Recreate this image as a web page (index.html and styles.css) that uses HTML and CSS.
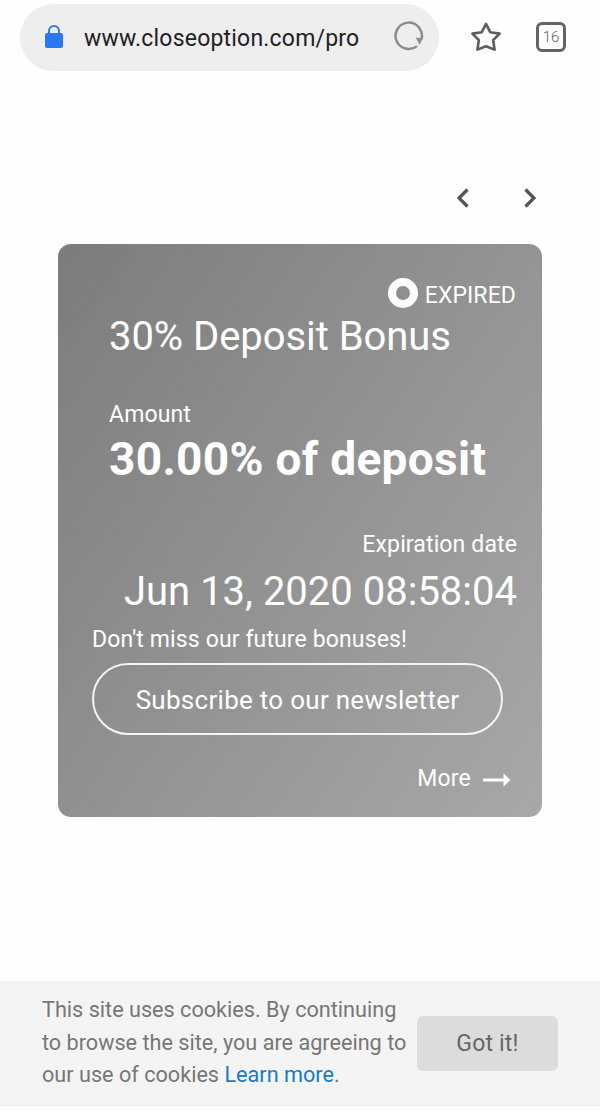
FILE: index.html
```html
<!DOCTYPE html>
<html lang="en">
<head>
    <meta charset="UTF-8">
    <meta name="viewport" content="width=device-width, initial-scale=1.0">
    <title>Bonus - CloseOption</title>
    <link rel="stylesheet" href="styles.css">
</head>
<body>
    <header class="browser-bar">
        <div class="address">
            <svg class="lock" width="20" height="26" viewBox="0 0 20 26">
                <path d="M5 11V7a5 5 0 0 1 10 0v4" fill="none" stroke="#2a78f5" stroke-width="2"/>
                <rect x="1" y="9" width="18" height="15" rx="2" fill="#2a78f5"/>
            </svg>
            <span class="url">www.closeoption.com/pro</span>
            <svg class="reload" width="32" height="32" viewBox="0 0 32 32">
                <path d="M24 26.1A13.2 13.2 0 1 1 28.4 19.5" fill="none" stroke="#8c8c8c" stroke-width="2.5"/>
                <path d="M22.6 17.4L29.4 18.4L26.8 24.8Z" fill="#8c8c8c"/>
            </svg>
        </div>
        <svg class="star" width="32" height="32" viewBox="0 0 32 32">
            <path d="M16 2.8L20.2 11.2L29.6 12.6L23.2 19.2L24.6 28.6L16 25.2L7.4 28.6L8.8 19.2L2.4 12.6L11.8 11.2Z" fill="none" stroke="#5c5c5c" stroke-width="2.6" stroke-linejoin="round"/>
        </svg>
        <div class="tabs">16</div>
    </header>

    <main>
        <nav class="slider-nav">
            <svg width="14" height="22" viewBox="0 0 14 22">
                <path d="M11.5 2.5L3 11L11.5 19.5" fill="none" stroke="#555" stroke-width="3.2"/>
            </svg>
            <svg width="14" height="22" viewBox="0 0 14 22">
                <path d="M2.5 2.5L11 11L2.5 19.5" fill="none" stroke="#555" stroke-width="3.2"/>
            </svg>
        </nav>

        <section class="card">
            <div class="status">
                <span class="status-icon"></span>
                <span class="status-text">EXPIRED</span>
            </div>
            <h1 class="title">30% Deposit Bonus</h1>
            <p class="label amount-label">Amount</p>
            <p class="amount">30.00% of deposit</p>
            <p class="label date-label">Expiration date</p>
            <p class="date">Jun 13, 2020 08:58:04</p>
            <p class="label hint">Don't miss our future bonuses!</p>
            <a class="subscribe">Subscribe to our newsletter</a>
            <a class="more">
                <span>More</span>
                <svg width="28" height="14" viewBox="0 0 28 14">
                    <path d="M0 7H22" stroke="#fff" stroke-width="3"/>
                    <path d="M20.5 0.5L27.5 7L20.5 13.5Z" fill="#fff"/>
                </svg>
            </a>
        </section>
    </main>

    <footer class="cookies">
        <p class="cookies-text">This site uses cookies. By continuing<br>to browse the site, you are agreeing to<br>our use of cookies <a class="learn">Learn more</a>.</p>
        <button class="got-it">Got it!</button>
    </footer>
</body>
</html>
```
FILE: styles.css
```css
* {
    box-sizing: border-box;
}

body {
    margin: 0;
    height: 1113px;
    display: flex;
    flex-direction: column;
    font-family: Roboto, "Liberation Sans", sans-serif;
    background-color: #fefefe;
}

h1, p {
    margin: 0;
    font-weight: 400;
    white-space: nowrap;
}

svg {
    display: block;
    flex: none;
}

.browser-bar {
    display: flex;
    align-items: center;
    height: 74px;
    padding-left: 20px;
}

.address {
    display: flex;
    align-items: center;
    width: 419px;
    height: 67px;
    padding-left: 24px;
    border-radius: 34px;
    background-color: #eee;
}

.url {
    width: 290px;
    margin-left: 20px;
    padding-top: 4px;
    font-size: 23px;
    line-height: 28px;
    letter-spacing: 0.2px;
    color: #222;
}

.reload {
    margin: 0 0 2px 19px;
}

.star {
    margin-left: 31px;
}

.tabs {
    width: 30px;
    height: 30px;
    margin: 0 0 1px 34px;
    border: 3px solid #646464;
    border-radius: 6px;
    font-size: 15px;
    font-weight: 300;
    line-height: 24px;
    text-align: center;
    color: #5c5c5c;
}

main {
    flex: 1;
    padding: 113px 58px 0;
}

.slider-nav {
    display: flex;
    justify-content: flex-end;
    gap: 53px;
    padding-right: 5px;
}

.card {
    display: flex;
    flex-direction: column;
    height: 572.5px;
    margin-top: 35px;
    padding: 34px 25px 0 34px;
    border-radius: 13px;
    background: linear-gradient(125deg, #7c7c7c, #a8a8a8);
    color: #fff;
}

.status {
    display: flex;
    justify-content: flex-end;
    gap: 7px;
    height: 30px;
    padding-right: 1px;
}

.status-icon {
    width: 30px;
    height: 30px;
    border: 8px solid #fff;
    border-radius: 50%;
}

.status-text {
    padding-top: 4px;
    font-size: 23px;
    line-height: 27px;
    letter-spacing: 0.1px;
}

.title {
    margin: 6px 0 0 17px;
    font-size: 40px;
    line-height: 46px;
    letter-spacing: -0.05px;
}

.label {
    font-size: 23px;
    line-height: 30px;
    letter-spacing: 0.13px;
}

.amount-label {
    margin: 40px 0 0 17px;
}

.amount {
    margin: 2px 0 0 17px;
    font-size: 46px;
    font-weight: 700;
    line-height: 54px;
    letter-spacing: 0.3px;
}

.date-label {
    margin-top: 44px;
    text-align: right;
}

.date {
    margin-top: 9px;
    font-size: 40px;
    line-height: 46px;
    text-align: right;
}

.hint {
    margin-top: 10px;
}

.subscribe {
    width: 411px;
    height: 72px;
    margin-top: 8px;
    border: 2px solid #f4f4f4;
    border-radius: 36px;
    font-size: 26px;
    line-height: 70px;
    text-align: center;
    letter-spacing: 0.28px;
}

.more {
    display: flex;
    align-items: center;
    justify-content: flex-end;
    gap: 12px;
    margin-top: 29px;
    padding-right: 6px;
    font-size: 23px;
    line-height: 30px;
    letter-spacing: 0.2px;
}

.more svg {
    margin-top: 2px;
}

.cookies {
    display: flex;
    align-items: center;
    height: 125px;
    margin-bottom: 7px;
    padding-left: 42px;
    border-bottom: 1px solid #e9e9e9;
    background-color: #f4f4f4;
}

.cookies-text {
    width: 375px;
    font-size: 21.65px;
    line-height: 32.6px;
    color: #777;
}

.learn {
    color: #1a7bc4;
}

.got-it {
    width: 141px;
    height: 55px;
    border: none;
    border-radius: 6px;
    background-color: #dcdcdc;
    font-family: inherit;
    font-size: 23px;
    letter-spacing: 0.2px;
    color: #666;
}
```
